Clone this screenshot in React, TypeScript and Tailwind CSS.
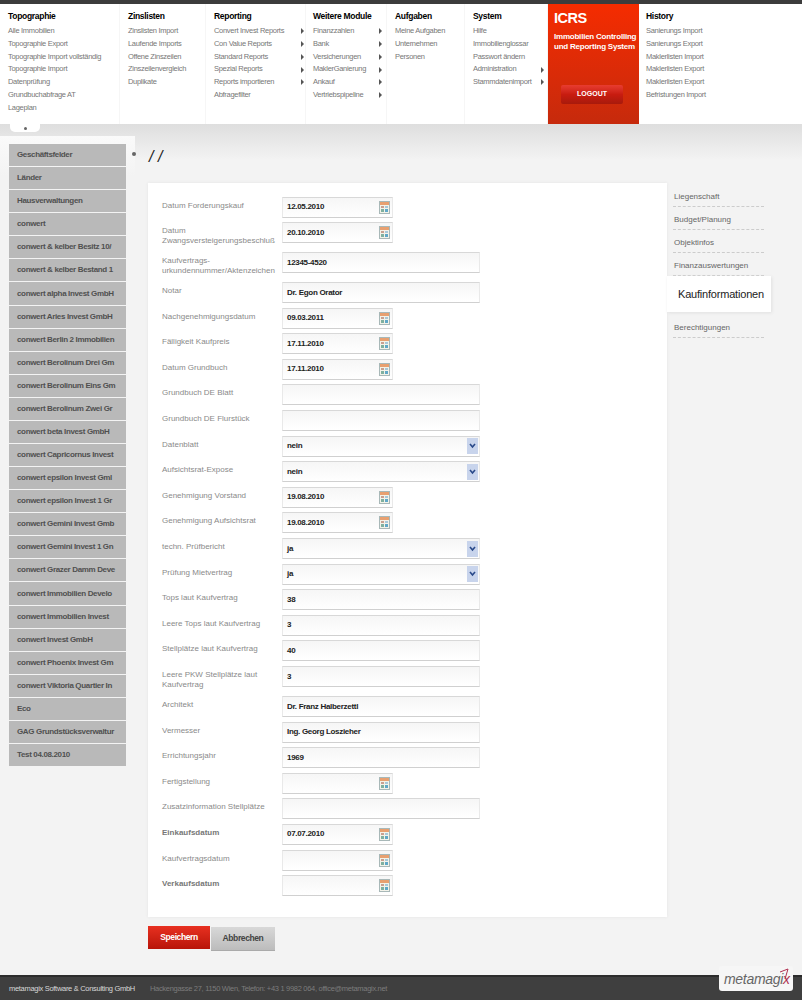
import React from "react";

type MenuItem = { t: string; a?: boolean };
type Col = { title: string; x: number; w: number; arrowW?: number; items: MenuItem[] };
const i = (t: string, a = false): MenuItem => ({ t, a });

const colsA: Col[] = [
  { title: "Topographie", x: 8, w: 120, items: ["Alle Immobilien", "Topographie Export", "Topographie Import vollständig", "Topographie Import", "Datenprüfung", "Grundbuchabfrage AT", "Lageplan"].map((t) => i(t)) },
  { title: "Zinslisten", x: 8, w: 86, items: ["Zinslisten Import", "Laufende Imports", "Offene Zinszeilen", "Zinszeilenvergleich", "Duplikate"].map((t) => i(t)) },
  { title: "Reporting", x: 8, w: 100, arrowW: 90, items: [i("Convert Invest Reports", true), i("Con Value Reports", true), i("Standard Reports", true), i("Spezial Reports", true), i("Reports importieren", true), i("Abfragefilter")] },
  { title: "Weitere Module", x: 7, w: 81, arrowW: 69, items: [i("Finanzzahlen", true), i("Bank", true), i("Versicherungen", true), i("MaklerGanierung", true), i("Ankauf", true), i("Vertriebspipeline", true)] },
  { title: "Aufgaben", x: 8, w: 78, items: ["Meine Aufgaben", "Unternehmen", "Personen"].map((t) => i(t)) },
  { title: "System", x: 8, w: 83, arrowW: 71, items: [i("Hilfe"), i("Immobilienglossar"), i("Passwort ändern"), i("Administration", true), i("Stammdatenimport", true)] },
];
const history = ["Sanierungs Import", "Sanierungs Export", "Maklerlisten Import", "Maklerlisten Export", "Maklerlisten Export", "Befristungen Import"];

const sidebar = ["Geschäftsfelder", "Länder", "Hausverwaltungen", "conwert", "conwert & kelber Besitz 10/", "conwert & kelber Bestand 1", "conwert alpha Invest GmbH", "conwert Aries Invest GmbH", "conwert Berlin 2 Immobilien", "conwert Berolinum Drei Gm", "conwert Berolinum Eins Gm", "conwert Berolinum Zwei Gr", "conwert beta Invest GmbH", "conwert Capricornus Invest", "conwert epsilon Invest Gml", "conwert epsilon Invest 1 Gr", "conwert Gemini Invest Gmb", "conwert Gemini Invest 1 Gn", "conwert Grazer Damm Deve", "conwert Immobilien Develo", "conwert Immobilien Invest", "conwert Invest GmbH", "conwert Phoenix Invest Gm", "conwert Viktoria Quartier In", "Eco", "GAG Grundstücksverwaltur", "Test 04.08.2010"];

type Row = { l: string; v?: string; k: "d" | "t" | "s"; tall?: boolean; strong?: boolean };
const rows: Row[] = [
  { l: "Datum Forderungskauf", v: "12.05.2010", k: "d" },
  { l: "Datum Zwangsversteigerungsbeschluß", v: "20.10.2010", k: "d", tall: true },
  { l: "Kaufvertrags-urkundennummer/Aktenzeichen", v: "12345-4520", k: "t", tall: true },
  { l: "Notar", v: "Dr. Egon Orator", k: "t" },
  { l: "Nachgenehmigungsdatum", v: "09.03.2011", k: "d" },
  { l: "Fälligkeit Kaufpreis", v: "17.11.2010", k: "d" },
  { l: "Datum Grundbuch", v: "17.11.2010", k: "d" },
  { l: "Grundbuch DE Blatt", k: "t" },
  { l: "Grundbuch DE Flurstück", k: "t" },
  { l: "Datenblatt", v: "nein", k: "s" },
  { l: "Aufsichtsrat-Expose", v: "nein", k: "s" },
  { l: "Genehmigung Vorstand", v: "19.08.2010", k: "d" },
  { l: "Genehmigung Aufsichtsrat", v: "19.08.2010", k: "d" },
  { l: "techn. Prüfbericht", v: "ja", k: "s" },
  { l: "Prüfung Mietvertrag", v: "ja", k: "s" },
  { l: "Tops laut Kaufvertrag", v: "38", k: "t" },
  { l: "Leere Tops laut Kaufvertrag", v: "3", k: "t" },
  { l: "Stellplätze laut Kaufvertrag", v: "40", k: "t" },
  { l: "Leere PKW Stellplätze laut Kaufvertrag", v: "3", k: "t", tall: true },
  { l: "Architekt", v: "Dr. Franz Halberzettl", k: "t" },
  { l: "Vermesser", v: "Ing. Georg Loszieher", k: "t" },
  { l: "Errichtungsjahr", v: "1969", k: "t" },
  { l: "Fertigstellung", k: "d" },
  { l: "Zusatzinformation Stellplätze", k: "t" },
  { l: "Einkaufsdatum", v: "07.07.2010", k: "d", strong: true },
  { l: "Kaufvertragsdatum", k: "d" },
  { l: "Verkaufsdatum", k: "d", strong: true },
];

function Arrow() {
  return <span className="h-0 w-0 border-y-[3px] border-l-[3px] border-y-transparent border-l-[#555]" />;
}

function MenuCol({ col }: { col: Col }) {
  return (
    <div className="h-full shrink-0 border-r border-[#f6f6f6] pt-[7px]" style={{ width: col.w, paddingLeft: col.x }}>
      <div className="mb-[3px] h-[11px] text-[8.5px] font-bold leading-[11px] tracking-[-0.3px] text-black">{col.title}</div>
      {col.items.map((m, n) => (
        <div key={n} className="flex h-[12.75px] items-center justify-between text-[7.5px] leading-[12.75px] tracking-[-0.3px] text-[#777]" style={{ width: col.arrowW }}>
          <span className="whitespace-nowrap">{m.t}</span>
          {m.a && <Arrow />}
        </div>
      ))}
    </div>
  );
}

function Calendar() {
  return (
    <svg width="11" height="13" viewBox="0 0 11 13" className="shrink-0">
      <rect x="0.5" y="0.5" width="10" height="12" fill="#f3f3ea" stroke="#a8b8b8" />
      <rect x="1" y="1" width="9" height="3" fill="#e8a070" />
      <rect x="2" y="5" width="3" height="2" fill="#c8a090" />
      <rect x="6" y="5" width="3" height="2" fill="#a8c8d8" />
      <rect x="2" y="8" width="3" height="3" fill="#80b0a0" />
      <rect x="6" y="8" width="3" height="3" fill="#60a8c8" />
    </svg>
  );
}

function Chevron() {
  return (
    <span className="flex h-[16px] w-[11px] items-center justify-center bg-[#c8d4ec]">
      <svg width="7" height="6" viewBox="0 0 7 6">
        <path d="M1 1 L3.5 4 L6 1" fill="none" stroke="#2a4a8a" strokeWidth="1.6" />
      </svg>
    </span>
  );
}

function Field({ r }: { r: Row }) {
  const w = r.k === "d" ? "w-[111px]" : "w-[198px]";
  return (
    <div className={`flex h-[21px] ${w} items-center justify-between border border-[#e9e9e9] border-b-[#d0d0d0] border-t-[#d8d8d8] bg-gradient-to-b from-[#f6f6f6] to-white pl-[4px] pr-[1px] text-[8px] font-bold tracking-[-0.3px] text-[#222]`}>
      <span className="whitespace-nowrap">{r.v}</span>
      {r.k === "d" && <span className="mr-[1px]"><Calendar /></span>}
      {r.k === "s" && <Chevron />}
    </div>
  );
}

export default function App() {
  return (
    <div className="flex h-[1000px] w-[802px] flex-col overflow-hidden bg-[#f3f3f3] font-['Liberation_Sans',Arial,sans-serif]">
      <div className="h-[4px] shrink-0 bg-[#3c3c3c]" />
      <header className="relative flex h-[120px] shrink-0 bg-white">
        {colsA.map((c) => (
          <MenuCol key={c.title} col={c} />
        ))}
        <div className="flex h-full w-[91px] shrink-0 flex-col bg-gradient-to-b from-[#f52c00] to-[#c62a0c] pl-[6px] pt-[6px] text-white">
          <div className="text-[14.5px] font-bold leading-[17px] tracking-[-0.5px]">ICRS</div>
          <div className="mt-[5px] whitespace-nowrap text-[8px] font-bold leading-[10px] tracking-[-0.22px]">
            Immobilien Controlling
            <br />
            und Reporting System
          </div>
          <div className="ml-[7px] mt-[33px] flex h-[19px] w-[62px] items-center justify-center rounded-[2px] bg-gradient-to-b from-[#e83c30] via-[#c81c10] to-[#a81a0c] text-[7px] font-bold">LOGOUT</div>
        </div>
        <div className="pl-[7px] pt-[7px]">
          <div className="mb-[3px] h-[11px] text-[8.5px] font-bold leading-[11px] tracking-[-0.3px] text-black">History</div>
          {history.map((h, n) => (
            <div key={n} className="h-[12.75px] whitespace-nowrap text-[7.5px] leading-[12.75px] tracking-[-0.3px] text-[#777]">{h}</div>
          ))}
        </div>
      </header>

      <div className="flex min-h-0 flex-1 bg-[linear-gradient(#dedede,#f3f3f3_36px)]">
        <aside className="relative w-[148px] shrink-0 pt-[12px]">
          <div className="ml-[10px] -mt-[12px] flex h-[8px] w-[30px] items-center justify-center rounded-b-[5px] bg-white">
            <span className="h-[3px] w-[3px] rounded-full bg-[#666]" />
          </div>
          <div className="mt-[4px] w-[135px] bg-[linear-gradient(#fafafa,#f3f3f3_40px)] pl-[9px] pt-[8px]">
            <div className="flex w-[117px] flex-col gap-[1px]">
              {sidebar.map((s) => (
                <div key={s} className="flex h-[22.08px] items-center overflow-hidden whitespace-nowrap bg-[#b9b9b9] pl-[8px] text-[8px] font-bold tracking-[-0.35px] text-[#505050]">
                  {s}
                </div>
              ))}
            </div>
          </div>
          <span className="absolute left-[132px] top-[28px] h-[4px] w-[4px] rounded-full bg-[#666]" />
        </aside>

        <main className="w-[519px] shrink-0">
          <div className="flex h-[59px] items-end whitespace-pre pb-[18px] pl-[1px] text-[16px] italic leading-[16px] text-[#222]">/ /</div>
          <div className="h-[734px] bg-white pl-[14px] pt-[13.5px] shadow-[0_0_3px_#e4e4e4]">
            {rows.map((r) => (
              <div key={r.l} className={`flex ${r.tall ? "h-[30px]" : "h-[25.6px]"}`}>
                <div className={`w-[120px] shrink-0 pt-[4px] text-[8px] leading-[10px] ${r.strong ? "font-bold text-[#777]" : "text-[#8a8a8a]"}`}>
                  {r.l}
                </div>
                <Field r={r} />
              </div>
            ))}
          </div>
          <div className="mt-[9px] flex items-start gap-[1px]">
            <div className="flex h-[23px] w-[62px] items-center justify-center bg-gradient-to-b from-[#e83020] to-[#b81408] text-[8.5px] font-bold tracking-[-0.4px] text-white">Speichern</div>
            <div className="mt-[1px] flex h-[24px] w-[64px] items-center justify-center border-b border-[#aaa] bg-gradient-to-b from-[#d8d8d8] to-[#bcbcbc] text-[8.5px] font-bold tracking-[-0.4px] text-[#444]">Abbrechen</div>
          </div>
        </main>

        <nav className="w-[135px] shrink-0 pt-[60px] text-[8px] text-[#666]">
          {["Liegenschaft", "Budget/Planung", "Objektinfos", "Finanzauswertungen"].map((t) => (
            <div key={t} className="ml-[6px] flex h-[23px] w-[91px] items-end whitespace-nowrap border-b border-dashed border-[#ccc] pb-[4px] pl-[1px] leading-[11px]">{t}</div>
          ))}
          <div className="flex h-[36px] w-[104px] items-center whitespace-nowrap bg-white pl-[11px] text-[11px] tracking-[-0.2px] text-[#222] shadow-[1px_1px_3px_#e0e0e0]">Kaufinformationen</div>
          <div className="ml-[6px] mt-[3px] flex h-[23px] w-[91px] items-end border-b border-dashed border-[#ccc] pb-[4px] pl-[1px] leading-[11px]">Berechtigungen</div>
        </nav>
      </div>

      <footer className="relative flex h-[25px] shrink-0 items-center border-t-2 border-[#2c2c2c] bg-[#3f3f3f] pl-[9px] text-[7.5px] tracking-[-0.3px]">
        <span className="whitespace-nowrap text-[#d8d8d8]">metamagix Software &amp; Consulting GmbH</span>
        <span className="ml-[15px] whitespace-nowrap text-[#7c7c7c]">Hackengasse 27, 1150 Wien, Telefon: +43 1 9982 064, office@metamagix.net</span>
        <div className="absolute -top-[11px] left-[719px] flex h-[25px] w-[74px] items-center rounded-[3px] bg-[#f6f6f6] pl-[5px] text-[14px] italic leading-none tracking-[-0.3px] text-[#666]">
          metamagi<span className="text-[#b03050]">x</span>
          <svg width="10" height="12" viewBox="0 0 10 12" className="absolute right-[4px] top-[2px]">
            <path d="M1 4 L9 1 L6 11" fill="none" stroke="#b03050" strokeWidth="1" />
          </svg>
        </div>
      </footer>
    </div>
  );
}
